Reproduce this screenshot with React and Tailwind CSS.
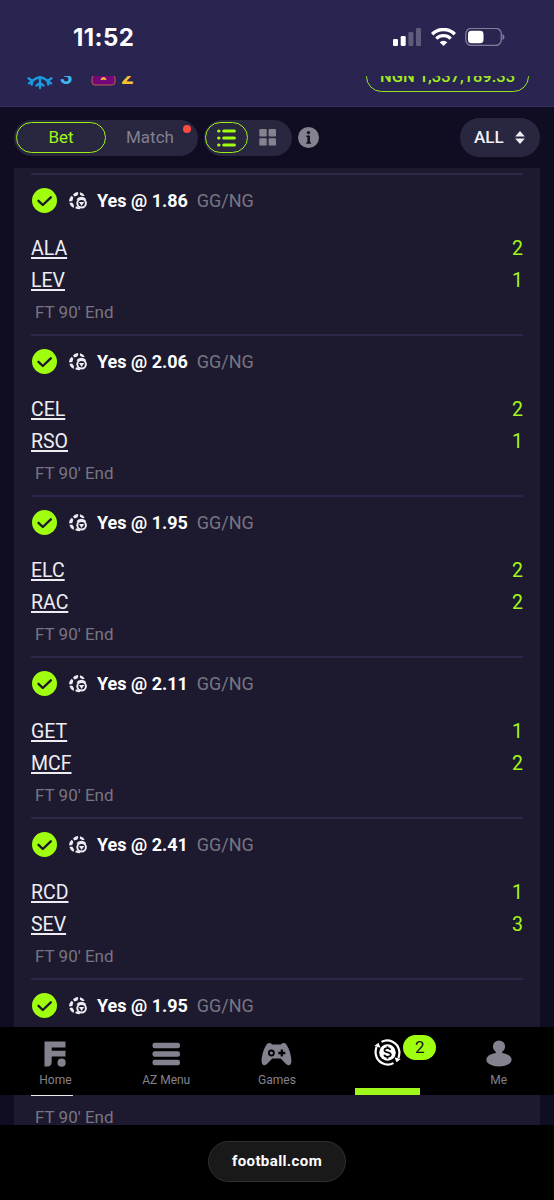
import React from 'react';

const bets = [
  { odds: '1.86', home: 'ALA', away: 'LEV', score: [2, 1] },
  { odds: '2.06', home: 'CEL', away: 'RSO', score: [2, 1] },
  { odds: '1.95', home: 'ELC', away: 'RAC', score: [2, 2] },
  { odds: '2.11', home: 'GET', away: 'MCF', score: [1, 2] },
  { odds: '2.41', home: 'RCD', away: 'SEV', score: [1, 3] },
  { odds: '1.95', home: 'VIL', away: 'RMA', score: [] },
];

const StatusBar = () => (
  <div className="h-[76px] shrink-0 flex items-start justify-between pl-[73px] pr-[48px] pt-[22px]">
    <span className="font-['Inter'] font-bold text-[24px] tracking-[0.4px] leading-8 text-white">11:52</span>
    <div className="flex items-center pt-[6px]">
      <svg width="28" height="18" viewBox="0 0 28 18" fill="#fff">
        <rect x="0" y="11" width="5" height="7" rx="1.3" />
        <rect x="7.7" y="8" width="5" height="10" rx="1.3" />
        <rect x="15.4" y="4" width="5" height="14" rx="1.3" opacity="0.25" />
        <rect x="23" y="0" width="5" height="18" rx="1.3" opacity="0.25" />
      </svg>
      <svg className="ml-[10px]" width="25" height="18" viewBox="0 0 25 18" fill="none" stroke="#fff" strokeWidth="3.4">
        <path d="M1.2 6.2a16 16 0 0 1 22.6 0" />
        <path d="M5.3 10.6a10.2 10.2 0 0 1 14.4 0" />
        <path d="M12.5 18l-3.8-3.8a5.4 5.4 0 0 1 7.6 0z" fill="#fff" stroke="none" />
      </svg>
      <svg className="ml-[9px] mr-px" width="40" height="18" viewBox="0 0 40 18">
        <rect x="0.8" y="0.4" width="35.5" height="17" rx="5.4" fill="none" stroke="#817c98" strokeWidth="1.3" />
        <rect x="3" y="2.8" width="15.5" height="12.4" rx="3.4" fill="#fff" />
        <path d="M37.5 6c2.6 1 2.6 5.2 0 6.2z" fill="#817c98" />
      </svg>
    </div>
  </div>
);

// Rewards and balance, scrolled half way under the status bar
const BalanceStrip = () => (
  <div className="h-[31px] shrink-0 overflow-hidden border-b border-[#352e60]">
    <div className="-mt-[15px] h-[31px] flex items-center pl-[27px] pr-[25px]">
      <svg width="26" height="27" viewBox="0 0 26 27" fill="none" stroke="#1a9be0" strokeWidth="2.3" strokeLinecap="round">
        <path d="M13 1v24M9.5 22.5l3.500-2.500 3.500 2.500" />
        <path d="M2 20.300l3.500-2.300q3.500-3.500 7.500-3.500t7.500 3.500l3.500 2.300M1.500 15.300l4 2.700-.7 3.500M24.500 15.300l-4 2.700 .7 3.500" />
      </svg>
      <span className="ml-[7px] w-3 font-bold text-[22px] leading-6 text-[#3db8ee]">3</span>
      <svg className="ml-[19px]" width="25" height="18" viewBox="0 0 25 18">
        <path d="M3 1h19q2 0 2 2v3a3 3 0 0 0 0 4v4q0 3-3 3H4q-3 0-3-3v-4a3 3 0 0 0 0-4V3q0-2 2-2z" fill="#74077a" stroke="#b66352" />
        <path d="M9.5 11.500q.8-2.600 3-2.600t3 2.600l-1.500.8q-1.500-1.400-3 0z" fill="#f7b928" />
      </svg>
      <span className="ml-[5px] font-bold text-[22px] leading-6 text-[#f9c22e]">2</span>
      <div className="ml-auto w-[163px] h-[31px] rounded-full border-[1.5px] border-[#9ae32b] pt-px flex items-center justify-center font-medium text-[16.5px] text-[#a0ee22] whitespace-nowrap">
        NGN 1,337,189.33
      </div>
    </div>
  </div>
);

const Toolbar = () => (
  <div className="h-[61px] shrink-0 flex items-center pl-[14px] pr-[14px]">
    <div className="relative w-[184px] h-9 rounded-full bg-[#292640] flex items-center p-[2px]">
      <div className="w-[90px] h-[31px] rounded-full border-[1.5px] border-[#9cf014] flex items-center justify-center text-[17px] text-[#a0f81a]">
        Bet
      </div>
      <div className="flex-1 pr-[2px] text-center text-[17px] text-[#82808f]">Match</div>
      <span className="absolute right-[7px] top-[5px] size-2 rounded-full bg-[#ff4b40]" />
    </div>
    <div className="ml-[6px] w-[88px] h-9 rounded-full bg-[#292640] flex items-center pl-[1px]">
      <div className="w-[43px] h-[31px] rounded-full border-[1.5px] border-[#9cf014] flex items-center justify-center">
        <svg width="19" height="18" viewBox="0 0 19 18" stroke="#a0ff0f" strokeWidth="3.2" strokeLinecap="round">
          <path d="M1.7 2h.2M6.8 2h10.5M1.7 9h.2M6.8 9h10.5M1.7 16h.2M6.8 16h10.5" />
        </svg>
      </div>
      <svg className="ml-[11px]" width="17" height="17" viewBox="0 0 17 17" fill="#85828f">
        <rect x="0.3" width="7.4" height="7.4" rx="1.2" />
        <rect x="9.6" width="7.4" height="7.4" rx="1.2" />
        <rect x="0.3" y="9.2" width="7.4" height="7.4" rx="1.2" />
        <rect x="9.6" y="9.2" width="7.4" height="7.4" rx="1.2" />
      </svg>
    </div>
    <svg className="ml-[6px]" width="21" height="21" viewBox="0 0 21 21">
      <circle cx="10.5" cy="10.5" r="10.5" fill="#85828f" />
      <circle cx="10.5" cy="5.6" r="1.6" fill="#100d23" />
      <path d="M8.3 8.5h3.6v6.7H13v1.5H8.3v-1.5h1.1v-5.2H8.3z" fill="#100d23" />
    </svg>
    <div className="ml-auto w-20 h-[39px] rounded-full bg-[#292640] flex items-center pl-[14px]">
      <span className="w-[41px] font-medium text-[17px] text-[#f2f1f6]">ALL</span>
      <svg width="10" height="13" viewBox="0 0 10 13" fill="#eeedf4">
        <path d="M5 0l4.8 5.5H.2z" />
        <path d="M5 13L.2 7.5h9.6z" />
      </svg>
    </div>
  </div>
);

const BallIcon = () => (
  <svg className="ml-[11px]" width="20" height="19" viewBox="0 0 20 19" fill="#eeedf4">
    <path d="M5 3.400Q6.800 1.300 9.600 1l.8 1.100-1 2.500-3 1z" />
    <path d="M12 1.200q3.300.7 4.700 3.500l-1.900.6-2.900-1.600z" />
    <path d="M3.900 4.700l1.400 2-1 3.200-3.100.7Q.7 7.200 3.900 4.700z" />
    <path d="M1.400 11.900l2.800-.4 1.800 2.800-.4 2.700Q2.200 15.300 1.400 11.900z" />
    <path d="M7.600 15.800l1.600-.5 3.100 2-.6 1q-2.500 0-4.300-1z" />
    <path d="M8.500 8.300q1.500-2.500 4.900-2.500t4.900 2.500l-1.800.9q-3.100-1.900-6.200 0z" />
    <circle cx="13.600" cy="12.300" r="4.300" fill="none" stroke="#eeedf4" strokeWidth="2" />
    <path d="M11 10.900h5.200l-2.600 4.100z" />
  </svg>
);

const TeamLine = ({ name, goals }) => (
  <div className="h-8 flex items-center justify-between text-[19.5px] leading-8">
    <span className="text-[#eeedf4] underline decoration-[1.5px] underline-offset-[1.5px] [text-decoration-skip-ink:none]">
      {name}
    </span>
    <span className="text-[#a0f81a]">{goals}</span>
  </div>
);

const BetRow = ({ bet }) => (
  <div className="h-[161px] shrink-0 border-t-2 border-[#2b2748] pt-[12px]">
    <div className="h-[26px] flex items-center">
      <svg width="26" height="26" viewBox="0 0 26 26">
        <circle cx="13.5" cy="13.500" r="12.500" fill="#a0ff0f" />
        <path d="M7.5 13.800l4.300 4.200 8-7.700" fill="none" stroke="#1d1a2f" strokeWidth="2.4" strokeLinecap="round" strokeLinejoin="round" />
      </svg>
      <BallIcon />
      <span className="ml-[9px] font-bold text-[18px] text-white">Yes @ {bet.odds}</span>
      <span className="ml-[9px] text-[18px] text-[#787582]">GG/NG</span>
    </div>
    <div className="mt-[20px]">
      <TeamLine name={bet.home} goals={bet.score[0]} />
      <TeamLine name={bet.away} goals={bet.score[1]} />
    </div>
    <div className="mt-[3px] pl-[4px] text-[17px] leading-6 text-[#787582]">FT 90&#39; End</div>
  </div>
);

const NavItem = ({ label, children }) => (
  <div className="flex flex-col items-center pt-[13px]">
    <div className="h-[27px] flex items-center">{children}</div>
    <span className="mt-[5px] text-[12px] leading-4 text-[#85828f]">{label}</span>
  </div>
);

const BottomNav = () => (
  <nav className="absolute inset-x-0 bottom-[30px] h-[68px] bg-black grid grid-cols-5">
    <NavItem label="Home">
      <svg width="22" height="26" viewBox="0 0 22 26" fill="#85828f">
        <path d="M0.5 0.5h21v6H7.7v3.2H21.5v5.8H7.7v5.2q0 4.8-4.7 4.8H0.5z" />
        <circle cx="17.6" cy="21.7" r="4.1" />
      </svg>
    </NavItem>
    <NavItem label="AZ Menu">
      <svg width="28" height="24" viewBox="0 0 28 24" fill="#85828f">
        <rect x="0.5" y="0.8" width="27.5" height="5.4" rx="2.2" />
        <rect x="0.5" y="9.3" width="27.5" height="5.4" rx="2.2" />
        <rect x="0.5" y="17.8" width="27.5" height="5.4" rx="2.2" />
      </svg>
    </NavItem>
    <NavItem label="Games">
      <svg width="31" height="24" viewBox="0 0 31 24">
        <path d="M6.5 1.5C8 .3 10.2 1.2 11.3 2.5h8.4C20.8 1.2 23 .3 24.5 1.5 28.5 6 30.5 14.5 30.4 19.5c0 4-3.4 4.7-5.7 2.3l-5-5.3h-8.400l-5 5.300C4 24.2.6 23.500.6 19.500.5 14.500 2.500 6 6.500 1.500z" fill="#85828f" />
        <circle cx="10.4" cy="11" r="2.5" fill="none" stroke="#000" strokeWidth="1.8" />
        <path d="M20.8 7.5v7M17.3 11h7" stroke="#000" strokeWidth="2.3" />
      </svg>
    </NavItem>
    <div className="relative flex flex-col items-center justify-between pt-[12px]">
      <svg width="27" height="27" viewBox="0 0 27 27" fill="none" stroke="#fff" strokeWidth="2.2">
        <path d="M7.5 2.9a12.2 12.2 0 0 1 17.7 8.6q.6 3.5-.7 7.5M19.5 24.1A12.2 12.2 0 0 1 1.8 15.5q-.6-3.500.7-7.500" />
        <path d="M20.5 18.2l6.2 1.8-4.2 3.2zM6.5 8.800L.3 7l4.200-3.200z" fill="#fff" stroke="none" />
        <circle cx="13.5" cy="13.5" r="8.3" fill="#fff" stroke="none" />
        <path d="M16.5 10.9c-.5-1.200-1.600-1.700-3-1.700-1.800 0-3.100.8-3.100 2.100 0 3 6.400 1.200 6.400 4.300 0 1.400-1.400 2.200-3.300 2.200-1.700 0-2.900-.7-3.300-2M13.500 7.200v2M13.500 17.800v2" stroke="#000" strokeWidth="1.7" />
      </svg>
      <span className="absolute left-[71px] top-[8px] w-[33px] h-[25px] rounded-full bg-[#a0ff0f] flex items-center justify-center text-[17px] text-[#16131f]">
        2
      </span>
      <span className="w-[65px] h-[7px] bg-[#a0f81a]" />
    </div>
    <NavItem label="Me">
      <svg width="26" height="27" viewBox="0 0 26 27" fill="#85828f">
        <circle cx="13" cy="6.5" r="6.1" />
        <path d="M9 9h8l-1.200 5h-5.600z" />
        <ellipse cx="13" cy="19.7" rx="12.6" ry="6.9" />
      </svg>
    </NavItem>
  </nav>
);

export default function App() {
  return (
    <div className="w-[554px] h-[1200px] overflow-hidden flex flex-col bg-[#100d23] font-['Roboto',sans-serif]">
      <header className="bg-[#2a2450] flex flex-col">
        <StatusBar />
        <BalanceStrip />
      </header>
      <Toolbar />
      <main className="relative h-[957px] shrink-0 overflow-hidden px-[14px]">
        <div className="bg-[#1d1a2f] px-[17px] pt-[5px] flex flex-col">
          {bets.map((bet, index) => (
            <BetRow key={index} bet={bet} />
          ))}
        </div>
        <BottomNav />
      </main>
      <footer className="flex-1 bg-black flex justify-center pt-[16px]">
        <div className="w-[138px] h-[41px] rounded-full border border-[#303030] bg-[#191919] flex items-center justify-center font-bold text-[15px] tracking-[0.4px] text-white">
          football.com
        </div>
      </footer>
    </div>
  );
}
